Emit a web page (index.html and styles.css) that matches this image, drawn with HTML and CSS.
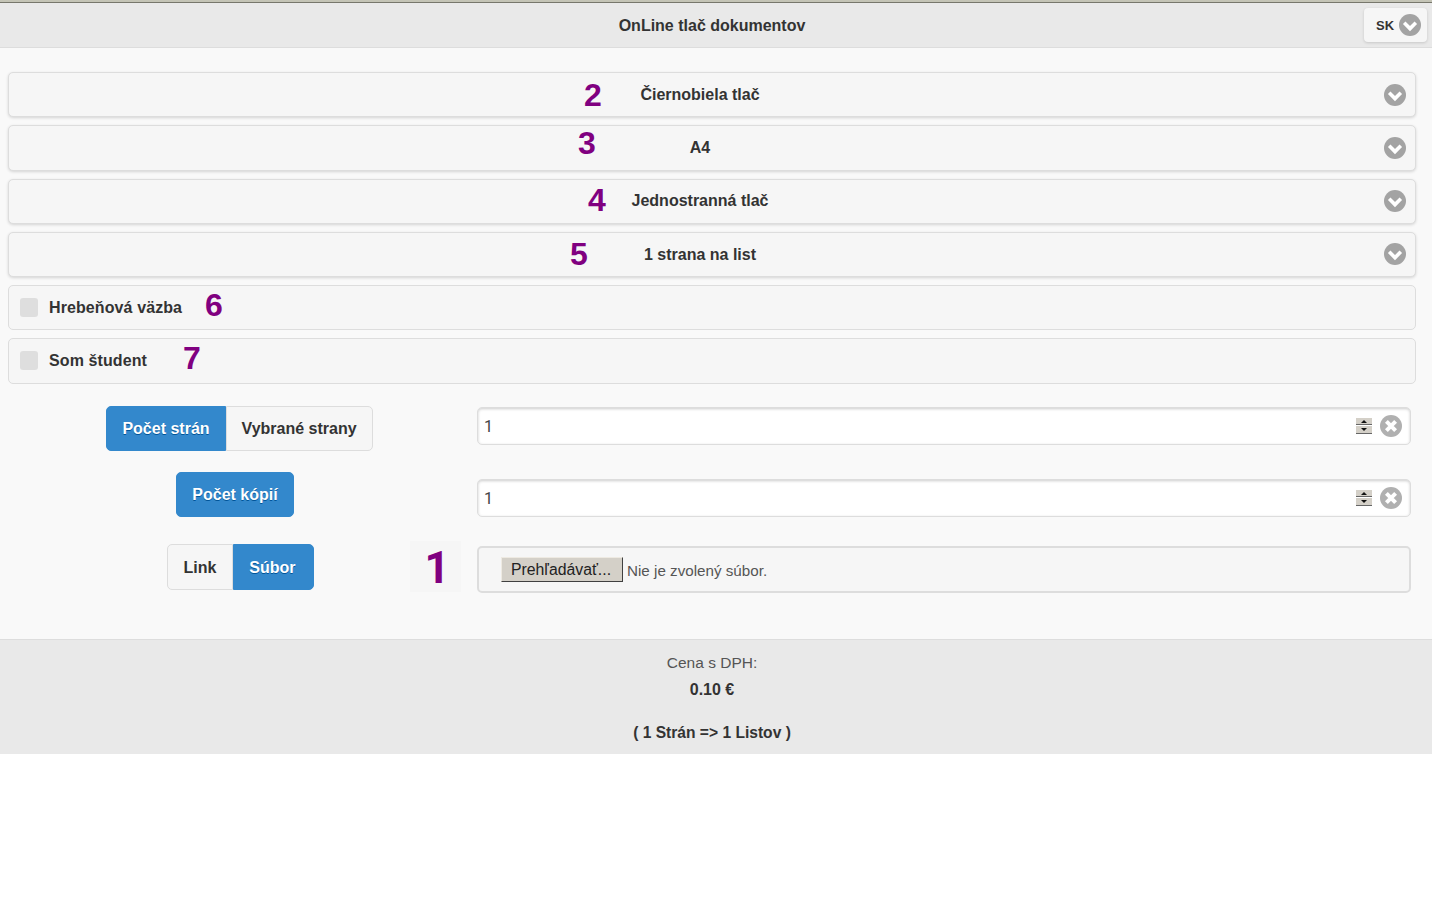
FILE: index.html
```html
<!DOCTYPE html>
<html lang="sk">
<head>
<meta charset="utf-8">
<title>OnLine tlač dokumentov</title>
<link rel="stylesheet" href="styles.css">
</head>
<body>
<div class="page">
  <header class="topbar">
    <h1 class="title">OnLine tlač dokumentov</h1>
    <button class="lang" type="button">
      <span>SK</span>
      <svg class="ico" viewBox="0 0 22 22"><circle cx="11" cy="11" r="11"/><path d="M5.2 8.8 11 14.6l5.8-5.8" class="mark"/></svg>
    </button>
  </header>

  <main class="content">
    <div class="stack">
      <div class="row select"><span>Čiernobiela tlač</span><svg class="ico" viewBox="0 0 22 22"><circle cx="11" cy="11" r="11"/><path d="M5.2 8.8 11 14.6l5.8-5.8" class="mark"/></svg></div>
      <div class="row select"><span>A4</span><svg class="ico" viewBox="0 0 22 22"><circle cx="11" cy="11" r="11"/><path d="M5.2 8.8 11 14.6l5.8-5.8" class="mark"/></svg></div>
      <div class="row select"><span>Jednostranná tlač</span><svg class="ico" viewBox="0 0 22 22"><circle cx="11" cy="11" r="11"/><path d="M5.2 8.8 11 14.6l5.8-5.8" class="mark"/></svg></div>
      <div class="row select"><span>1 strana na list</span><svg class="ico" viewBox="0 0 22 22"><circle cx="11" cy="11" r="11"/><path d="M5.2 8.8 11 14.6l5.8-5.8" class="mark"/></svg></div>
      <div class="row check"><i class="box"></i><span>Hrebeňová väzba</span></div>
      <div class="row check"><i class="box"></i><span>Som študent</span></div>
    </div>

    <section class="form">
      <div class="form-row first">
        <div class="seg"><span class="btn on">Počet strán</span><span class="btn">Vybrané strany</span></div>
        <div class="field">
          <span class="val">1</span>
          <span class="spin"><i class="up"></i><i class="down"></i></span>
          <svg class="ico clear" viewBox="0 0 22 22"><circle cx="11" cy="11" r="11"/><path d="M6.4 6.4l9.2 9.2M15.6 6.4l-9.2 9.2" class="mark x"/></svg>
        </div>
      </div>
      <div class="form-row second">
        <div class="seg shift"><span class="btn on solo">Počet kópií</span></div>
        <div class="field low">
          <span class="val">1</span>
          <span class="spin"><i class="up"></i><i class="down"></i></span>
          <svg class="ico clear" viewBox="0 0 22 22"><circle cx="11" cy="11" r="11"/><path d="M6.4 6.4l9.2 9.2M15.6 6.4l-9.2 9.2" class="mark x"/></svg>
        </div>
      </div>
      <div class="form-row third">
        <div class="seg seg-file"><span class="btn tall">Link</span><span class="btn on tall">Súbor</span></div>
        <div class="filefield">
          <span class="browse">Prehľadávať...</span>
          <span class="nofile">Nie je zvolený súbor.</span>
        </div>
      </div>
    </section>
  </main>

  <footer class="foot">
    <p class="price-label">Cena s DPH:</p>
    <p class="price">0.10 €</p>
    <p class="sheets">( 1 Strán =&gt; 1 Listov )</p>
  </footer>

  <b class="num n2">2</b>
  <b class="num n3">3</b>
  <b class="num n4">4</b>
  <b class="num n5">5</b>
  <b class="num n6">6</b>
  <b class="num n7">7</b>
  <b class="num n1">1</b>
</div>
</body>
</html>
```

FILE: styles.css
```css
* { box-sizing: border-box; }
html, body { margin: 0; padding: 0; background: #fff; }
body { font-family: "Liberation Sans", Arial, sans-serif; font-size: 16px; color: #333; overflow: hidden; }

.page { position: relative; width: 1432px; }

.topbar {
  position: relative;
  height: 48px;
  padding: 2px 8px 0 0;
  background: #e9e9e9;
  border-top: 2px solid #c4c4b6;
  border-bottom: 1px solid #ddd;
  box-shadow: inset 0 1px 0 #77776c;
  display: flex;
  align-items: center;
  justify-content: center;
}
.title { margin: 0; font-size: 16px; font-weight: bold; }
.lang {
  position: absolute;
  left: 1364px;
  top: 6px;
  width: 63px;
  height: 34px;
  padding: 0 6px 0 12px;
  border: 0;
  border-radius: 4px;
  background: #f6f6f6;
  box-shadow: 0 1px 3px rgba(0,0,0,.15);
  display: flex;
  align-items: center;
  justify-content: space-between;
  font: bold 13px "Liberation Sans", Arial, sans-serif;
  color: #333;
}

.ico { width: 22px; height: 22px; flex: none; display: block; }
.ico circle { fill: #a3a3a3; }
.ico .mark { fill: none; stroke: #fff; stroke-width: 3.6; }
.ico .x { stroke-width: 4; }

.content { background: #f9f9f9; padding: 24px 0 46px; height: 591px; }
.stack { display: flex; flex-direction: column; gap: 8px; margin: 0 16px 0 8px; }

.row {
  height: 45.25px;
  border: 1px solid #ddd;
  border-radius: 5px;
  background: #f6f6f6;
  font-weight: bold;
  display: flex;
  align-items: center;
}
.select {
  box-shadow: 0 1px 3px rgba(0,0,0,.15);
  padding: 0 9px 0 16px;
}
.select span { flex: 1; text-align: center; padding: .5px 9px 0 0; }
.check { padding-left: 11px; }
.check span { letter-spacing: .1px; }
.box { width: 18px; height: 19px; border-radius: 3px; background: #dedede; margin-right: 11px; }

.form { margin: 22px 21px 0 0; }
.form-row { display: grid; grid-template-columns: 477px 1fr; }
.form-row.first { height: 45px; margin-bottom: 21px; }
.form-row.second { height: 45px; margin-bottom: 27px; }
.form-row.third { height: 49px; }

.seg { display: flex; justify-content: center; align-items: flex-start; padding-left: 2px; }
.seg.shift { padding-left: 0; padding-right: 7px; }
.seg.seg-file { padding-left: 4px; }
.btn {
  height: 45px;
  padding: 2px 15px 0;
  display: flex;
  align-items: center;
  font-weight: bold;
  background: #f6f6f6;
  border: 1px solid #ddd;
}
.btn:first-child { border-radius: 5px 0 0 5px; }
.btn:last-child { border-radius: 0 5px 5px 0; }
.btn.tall { height: 46px; padding: 2px 16px 0 15px; }
.btn.tall.on { padding-right: 17px; }
.btn.on {
  background: #38c;
  border-color: #38c;
  color: #fff;
  text-shadow: 0 1px 0 #059;
}
.btn.solo { border-radius: 5px; }

.field {
  height: 38px;
  margin-top: 1px;
  padding: 0 8px 0 6px;
  background: #fff;
  border: 1px solid #ddd;
  border-radius: 5px;
  box-shadow: inset 0 1px 3px rgba(0,0,0,.2);
  display: flex;
  align-items: center;
}
.field.low { margin-top: 7px; }
.val { flex: 1; font-family: Roboto, sans-serif; color: #444; padding-top: 1px; }
.clear { margin-left: 8px; }
.clear circle { fill: #b0b0b0; }

.spin { width: 16px; height: 16px; display: flex; flex-direction: column; gap: 1px; }
.spin i { flex: 1; display: block; position: relative; background: #d4d0c8; border-bottom: 1px solid #666; }
.spin i::after {
  content: "";
  position: absolute;
  left: 5px;
  border-left: 3px solid transparent;
  border-right: 3px solid transparent;
}
.spin .up::after { top: 2px; border-bottom: 3px solid #111; }
.spin .down::after { top: 2px; border-top: 3px solid #111; }

.filefield {
  height: 47px;
  margin-top: 2px;
  padding: 0 0 0 22px;
  background: #f6f6f6;
  border: 2px solid #ddd;
  border-radius: 5px;
  display: flex;
  align-items: center;
  gap: 4px;
  font-size: 15.2px;
}
.browse {
  width: 122px;
  height: 25px;
  padding: 2px 2px 0 0;
  background: #d4d0c8;
  border: 1px solid;
  border-color: #eeeae2 #404040 #404040 #eeeae2;
  display: flex;
  align-items: center;
  justify-content: center;
  color: #222;
  font-size: 15.8px;
}
.nofile { color: #555; padding-top: 2px; }

.foot {
  height: 115px;
  background: #e9e9e9;
  border-top: 1px solid #ddd;
  text-align: center;
  padding: 14px 8px 0 0;
}
.foot p { margin: 0; line-height: 18px; }
.foot .price-label { color: #555; font-size: 15.5px; }
.foot .price { font-weight: bold; margin-top: 9px; }
.foot .sheets { font-weight: bold; margin-top: 25px; font-size: 15.6px; }

.num {
  position: absolute;
  width: 18px;
  font-size: 32px;
  line-height: 32px;
  font-weight: bold;
  color: #800080;
}
.n2 { left: 584px; top: 79px; }
.n3 { left: 578px; top: 127px; }
.n4 { left: 588px; top: 184px; }
.n5 { left: 570px; top: 238px; }
.n6 { left: 205px; top: 289px; }
.n7 { left: 183px; top: 342px; }
.n1 {
  left: 410px;
  top: 541px;
  width: 51px;
  height: 51px;
  padding: 2px 0 0 3px;
  background: #f6f6f6;
  font-family: Roboto, sans-serif;
  font-size: 44px;
  line-height: 51px;
  text-align: center;
}
```
